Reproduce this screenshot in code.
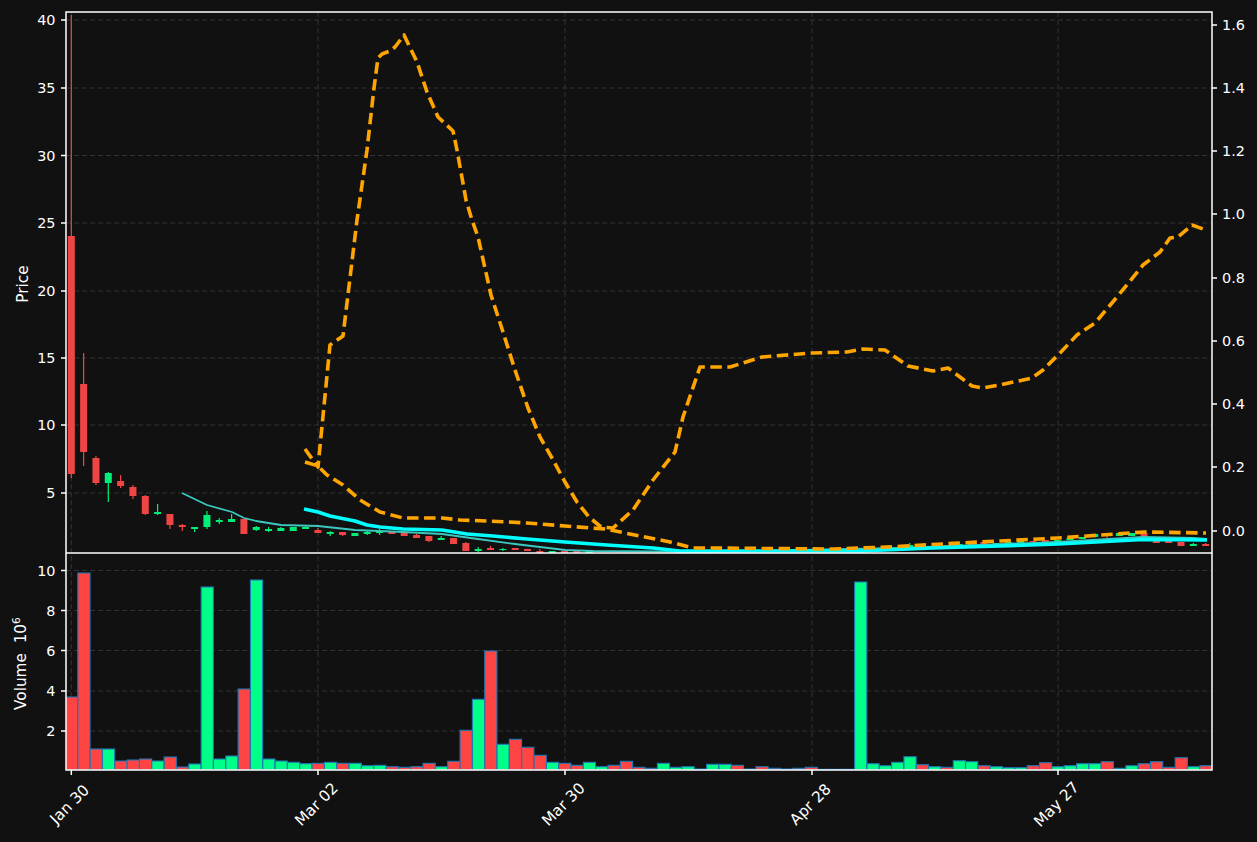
const X = (i: number) => 71.3 + 12.33 * i;
const R = "#f04545";
const G = "#00ee77";
const font = "'DejaVu Sans', sans-serif";

// [index, up, bodyTop, bodyBottom, wickTop, wickBottom]
const candles: [number, number, number, number, number, number][] = [
  [0,0,236,474,15,478],[1,0,384,452,353,466],[2,0,458,483,456,485],[3,1,473,483,472,502],
  [4,0,481,486,475,488],[5,0,487,496,485,499],[6,0,496,514,495,515],[7,1,512,514,504,515],
  [8,0,514,525,514,529],[9,0,525,527,524,531],[10,1,527,529,527,532],[11,1,515,527,511,529],
  [12,1,520,522,518,524],[13,1,519,522,514,522],[14,0,519,534,519,534],[15,1,527,530,526,531],
  [16,1,529,531,527,532],[17,1,528,531,527,531],[18,1,527,531,527,531],[19,1,527,529,526,529],
  [20,0,530,533,528,533],[21,1,532,534,531,536],[22,0,532,535,532,536],[23,1,533,536,533,536],
  [24,1,532,534,530,535],[25,1,531,533,529,535],[26,0,531,534,531,534],[27,0,532,536,531,536],
  [28,0,535,538,534,538],[29,0,536,541,536,542],[30,1,538,540,536,540],[31,0,538,544,538,544],
  [32,0,543,551,542,551],[33,1,549,551,547,552],[34,0,548,550,546,550],[35,1,549,550,548,551],
  [36,0,548,550,548,550],[37,0,549,551,549,551],[38,0,551,553,549,553],[39,1,551,553,551,553],
  [40,0,551,553,551,553],[41,0,551,553,551,553],[42,1,551,553,551,553],
  [68,1,545,547,543,547],[69,1,545,547,545,547],[70,1,546,548,546,548],[71,0,545,547,545,547],
  [72,1,544,546,544,546],[73,1,543,546,543,546],[74,0,542,544,542,544],[75,1,543,545,543,545],
  [76,1,542,544,542,544],[77,1,541,543,541,543],[78,0,541,542,541,543],[79,0,540,542,540,542],
  [80,1,540,542,540,542],[81,1,538,540,538,540],[82,1,537,539,537,539],[83,1,534,537,534,537],
  [84,0,534,536,534,538],[85,1,533,536,533,536],[86,1,533,536,533,536],[87,0,533,539,533,539],
  [88,0,539,543,539,543],[89,0,541,543,541,543],[90,0,542,546,542,546],[91,1,544,546,543,546],
  [92,0,544,546,543,546],
];

// [up, top]
const vols: [number, number][] = [
  [0,697],[0,573],[0,749],[1,749],[0,761],[0,760],[0,759],[1,761],[0,757],[0,767],[1,764],[1,587],
  [1,759],[1,756],[0,689],[1,580],[1,759],[1,761],[1,762.3],[1,763.7],[0,763.3],[1,762.3],[0,763.3],
  [1,763.3],[1,765.7],[1,765.3],[0,766.7],[0,767.3],[0,766.7],[0,763.3],[1,766.7],[0,761.3],[0,730.3],
  [1,699.3],[0,651],[1,744.3],[0,739.3],[0,747.3],[0,755.3],[1,762.3],[0,763.3],[0,765.3],[1,762.3],
  [1,766.7],[0,765.3],[0,761.3],[0,767.3],[0,768.3],[1,763.3],[1,767.3],[1,766.7],[1,769],[1,764.3],
  [1,764.3],[0,765.3],[1,769],[0,766.7],[0,768.3],[1,769],[0,768.3],[0,767.3],[1,769.3],[1,769.3],
  [1,769.3],[1,582],[1,763.7],[1,765.7],[1,762.3],[1,756.7],[0,764.7],[1,766.7],[0,767.3],[1,760.7],
  [1,761.7],[0,765.7],[1,766.7],[1,767.7],[1,767.7],[0,765.7],[0,762.7],[1,766.7],[1,765.7],[1,763.7],
  [1,763.7],[0,761.7],[1,768.3],[1,765.7],[0,763.7],[0,761.7],[0,767.3],[0,757.7],[1,766.7],[0,765.7],
];

const teal = "182,493 207,505 232,512 244,518 256,521 281,525 318,526 355,530 403,532 442,534 478,539 515,544 540,547 565,550 593,551 660,551.5 700,552 900,548 1058,542 1143,537 1193,538 1207,539";
const cyan = "304,509 318,512 330,516 355,521 367,525 380,527 403,529 442,530 467,534 493,536 527,539 565,542 607,545 653,548 680,551 860,551 933,548 1000,546 1058,544 1143,539.5 1207,540";
const orangeA = "305,449 318,467 330,345 343,336 357,220 367,150 374,88 378,58 382,54 390,51 395,47 404,35 417,62 427,92 438,117 453,131 457,150 466,200 472,220 478,237 491,295 503,332 515,370 528,408 540,437 552,458 565,482 577,502 589,517 601,527 613,528 633,510 653,480 675,452 683,417 700,367 730,367 762,357 812,353 847,352 863,349 885,350 908,366 933,371 948,368 972,386 983,388 1000,385 1032,378 1043,370 1060,353 1077,335 1095,323 1117,297 1143,265 1160,252 1170,238 1178,237 1192,225 1203,229";
const orangeB = "305,462 318,466 327,475 343,485 360,500 380,512 403,518 442,518 460,520 488,521 527,523 565,526 605,529 670,542 693,548 707,548 833,549 887,547 960,543 1000,541 1058,538 1130,533 1145,532 1206,533";

const gridX = [71.3, 318, 565, 812, 1058];
const priceTicks: [string, number][] = [["40",20],["35",88],["30",155.5],["25",223],["20",291],["15",358],["10",425],["5",493]];
const rightTicks: [string, number][] = [["1.6",25],["1.4",88],["1.2",151],["1.0",214],["0.8",278],["0.6",341],["0.4",404],["0.2",467],["0.0",531]];
const volTicks: [string, number][] = [["10",570.5],["8",610.5],["6",650.5],["4",691],["2",731]];
const dates = ["Jan 30", "Mar 02", "Mar 30", "Apr 28", "May 27"];
const gridProps = { stroke: "#333333", strokeWidth: 1, strokeDasharray: "5 3" };

export default function App() {
  return (
    <div className="w-full h-[842px] bg-[#111111] overflow-hidden">
      <svg width={1257} height={842} viewBox="0 0 1257 842" className="block" style={{ fontFamily: font }}>
        <defs>
          <clipPath id="top"><rect x={66} y={12} width={1146} height={541} /></clipPath>
          <clipPath id="bot"><rect x={66} y={553} width={1146} height={217} /></clipPath>
        </defs>

        <g {...gridProps}>
          {priceTicks.map(([l, y]) => <line key={l} x1={66} x2={1212} y1={y} y2={y} />)}
          {volTicks.map(([l, y]) => <line key={l} x1={66} x2={1212} y1={y} y2={y} />)}
          {gridX.map((x) => <line key={x} x1={x} x2={x} y1={12} y2={770} />)}
        </g>

        <g clipPath="url(#top)">
          {candles.map(([i, up, t, b, wt, wb]) => (
            <g key={i} fill={up ? G : R} stroke="none">
              <rect x={X(i) - 0.6} y={wt} width={1.2} height={wb - wt} />
              <rect x={X(i) - 3.5} y={t} width={7} height={b - t} />
            </g>
          ))}
          <polyline points={teal} fill="none" stroke="#3cc8bf" strokeWidth={1.8} strokeLinejoin="round" />
          <polyline points={cyan} fill="none" stroke="#00ffff" strokeWidth={3.6} strokeLinejoin="round" />
          <polyline points={orangeA} fill="none" stroke="#ffa500" strokeWidth={3.6} strokeDasharray="11.5 5.5" strokeLinejoin="round" />
          <polyline points={orangeB} fill="none" stroke="#ffa500" strokeWidth={3.6} strokeDasharray="11.5 5.5" strokeLinejoin="round" />
        </g>

        <g clipPath="url(#bot)">
          {vols.map(([up, t], i) => (
            <rect key={i} x={X(i) - 5.8} y={t} width={12.2} height={770 - t}
              fill={up ? "#00ff88" : "#ff4444"} stroke="#1f77b4" strokeWidth={1.1} />
          ))}
        </g>

        <g stroke="#ffffff" strokeWidth={1.5} fill="none">
          <rect x={66} y={12} width={1146} height={758} />
          <line x1={66} x2={1212} y1={553} y2={553} />
          {priceTicks.map(([l, y]) => <line key={l} x1={61} x2={66} y1={y} y2={y} />)}
          {volTicks.map(([l, y]) => <line key={l} x1={61} x2={66} y1={y} y2={y} />)}
          {rightTicks.map(([l, y]) => <line key={l} x1={1212} x2={1217} y1={y} y2={y} />)}
          {gridX.map((x) => <line key={x} x1={x} x2={x} y1={770} y2={775} />)}
        </g>

        <g fill="#ffffff" fontSize={14.4}>
          {priceTicks.map(([l, y]) => <text key={l} x={55.5} y={y + 5.3} textAnchor="end">{l}</text>)}
          {volTicks.map(([l, y]) => <text key={l} x={55.5} y={y + 5.3} textAnchor="end">{l}</text>)}
          {rightTicks.map(([l, y]) => <text key={l} x={1222} y={y + 5.3}>{l}</text>)}
          {dates.map((d, i) => (
            <text key={d} fontSize={15.3} transform={`translate(${gridX[i] + 2} 808) rotate(-45)`} textAnchor="middle">{d}</text>
          ))}
          <text fontSize={15.3} transform="translate(27.5 284) rotate(-90)" textAnchor="middle">Price</text>
          <text fontSize={15.3} transform="translate(26 710) rotate(-90)">
            Volume{"\u00a0\u00a0"}10<tspan fontSize={10.7} dy={-6}>6</tspan>
          </text>
        </g>
      </svg>
    </div>
  );
}
